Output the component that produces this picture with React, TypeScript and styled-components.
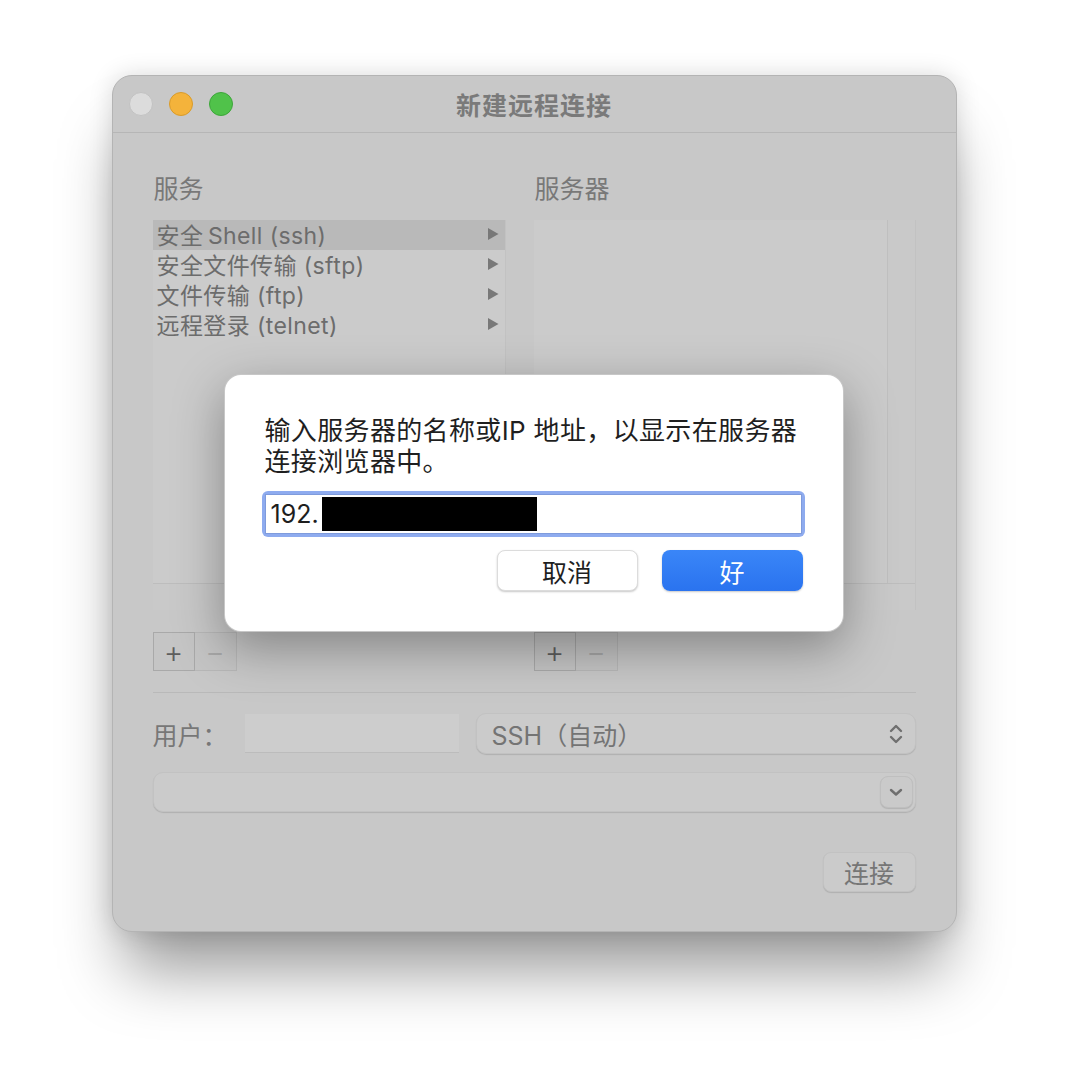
import styled, { createGlobalStyle } from "styled-components";

const GlobalStyle = createGlobalStyle`
  html, body {
    margin: 0;
    padding: 0;
    background: #ffffff;
  }
  body {
    font-family: "Inter", "Noto Sans CJK SC", sans-serif;
  }
`;

const services = [
  "安全\u2009Shell (ssh)",
  "安全文件传输 (sftp)",
  "文件传输 (ftp)",
  "远程登录 (telnet)",
];

const Arrow = () => (
  <svg width="12" height="14" viewBox="0 0 12 14">
    <polygon points="1,1 11.5,7 1,13" fill="#787878" />
  </svg>
);

const UpDown = () => (
  <svg width="14" height="24" viewBox="0 0 14 24">
    <path
      d="M2 9 L7 4 L12 9 M2 15 L7 20 L12 15"
      fill="none"
      stroke="#6f6f6f"
      strokeWidth="2.4"
      strokeLinecap="round"
      strokeLinejoin="round"
    />
  </svg>
);

const ChevronDown = () => (
  <svg width="14" height="10" viewBox="0 0 14 10">
    <path
      d="M2 3 L7 7.5 L12 3"
      fill="none"
      stroke="#6f6f6f"
      strokeWidth="2.4"
      strokeLinecap="round"
      strokeLinejoin="round"
    />
  </svg>
);

const AddRemove = () => (
  <Segment>
    <SegButton>+</SegButton>
    <SegButton $disabled>−</SegButton>
  </Segment>
);

export default function App() {
  return (
    <Page>
      <GlobalStyle />
      <Window>
        <TitleBar>
          <Lights>
            <Light $color="#dcdcdc" $ring="#c2c2c2" />
            <Light $color="#f4b33b" $ring="#d99b2a" />
            <Light $color="#50c24a" $ring="#3da63a" />
          </Lights>
          <Title>新建远程连接</Title>
          <span />
        </TitleBar>

        <Body>
          <Columns>
            <Column>
              <SectionLabel>服务</SectionLabel>
              <ListBox>
                <ListMain>
                  <Rows>
                    {services.map((name, i) => (
                      <Row key={name} $selected={i === 0}>
                        <span>{name}</span>
                        <Arrow />
                      </Row>
                    ))}
                  </Rows>
                </ListMain>
                <HScroll />
              </ListBox>
              <AddRemove />
            </Column>

            <Column>
              <SectionLabel>服务器</SectionLabel>
              <ListBox>
                <ListMain>
                  <Rows />
                  <VScroll />
                </ListMain>
                <HScroll />
              </ListBox>
              <AddRemove />
            </Column>
          </Columns>

          <Divider />

          <UserRow>
            <FieldLabel>用户：</FieldLabel>
            <TextField />
            <Popup>
              <span>SSH（自动）</span>
              <UpDown />
            </Popup>
          </UserRow>

          <Combo>
            <ComboButton>
              <ChevronDown />
            </ComboButton>
          </Combo>

          <Footer>
            <PlainButton>连接</PlainButton>
          </Footer>
        </Body>

        <Sheet>
          <Prompt>
            输入服务器的名称或IP 地址，以显示在服务器
            <br />
            连接浏览器中。
          </Prompt>
          <FocusRing>
            <AddressInput>
              192.
              <Redacted />
            </AddressInput>
          </FocusRing>
          <SheetButtons>
            <SheetButton>取消</SheetButton>
            <SheetButton $primary>好</SheetButton>
          </SheetButtons>
        </Sheet>
      </Window>
    </Page>
  );
}

const Page = styled.div`
  width: 1068px;
  height: 1080px;
  display: flex;
  justify-content: center;
  align-items: flex-start;
  padding-top: 75px;
  box-sizing: border-box;
  overflow: hidden;
`;

const Window = styled.div`
  position: relative;
  width: 845px;
  height: 857px;
  box-sizing: border-box;
  background: #c8c8c8;
  border-radius: 20px;
  border: 1px solid #b4b4b4;
  box-shadow: 0 50px 64px -12px rgba(0, 0, 0, 0.4),
    0 0 24px rgba(0, 0, 0, 0.14);
  display: flex;
  flex-direction: column;
`;

const TitleBar = styled.div`
  height: 56px;
  flex: none;
  display: grid;
  grid-template-columns: 1fr auto 1fr;
  align-items: center;
  padding: 0 16px;
  border-bottom: 1px solid #b6b6b6;
`;

const Lights = styled.div`
  display: flex;
  gap: 16px;
`;

const Light = styled.div<{ $color: string; $ring: string }>`
  width: 24px;
  height: 24px;
  box-sizing: border-box;
  border-radius: 50%;
  background: ${(p) => p.$color};
  border: 1px solid ${(p) => p.$ring};
`;

const Title = styled.div`
  font-size: 25px;
  font-weight: 700;
  color: #7a7a7a;
  letter-spacing: 1px;
`;

const Body = styled.div`
  flex: 1;
  display: flex;
  flex-direction: column;
  padding: 41px 40px 0 40px;
`;

const Columns = styled.div`
  display: grid;
  grid-template-columns: 353px 1fr;
  column-gap: 28px;
`;

const Column = styled.div`
  display: flex;
  flex-direction: column;
`;

const SectionLabel = styled.div`
  font-size: 25px;
  line-height: 30px;
  color: #787878;
  margin-bottom: 16px;
  padding-left: 1px;
`;

const ListBox = styled.div`
  height: 390px;
  display: flex;
  flex-direction: column;
  background: #cbcbcb;
  border-right: 1px solid #c2c2c2;
`;

const ListMain = styled.div`
  flex: 1;
  display: flex;
`;

const Rows = styled.div`
  flex: 1;
  display: flex;
  flex-direction: column;
`;

const Row = styled.div<{ $selected?: boolean }>`
  height: 30px;
  display: flex;
  align-items: center;
  justify-content: space-between;
  padding: 0 6px 2px 4px;
  box-sizing: border-box;
  font-size: 23px;
  letter-spacing: 0.4px;
  color: #6c6c6c;
  background: ${(p) => (p.$selected ? "#b9b9b9" : "transparent")};
`;

const VScroll = styled.div`
  width: 27px;
  border-left: 1px solid #bfbfbf;
  background: #c9c9c9;
`;

const HScroll = styled.div`
  height: 26px;
  flex: none;
  border-top: 1px solid #bdbdbd;
  background: #c9c9c9;
`;

const Segment = styled.div`
  display: flex;
  margin-top: 22px;
`;

const SegButton = styled.div<{ $disabled?: boolean }>`
  width: 42px;
  height: 39px;
  box-sizing: border-box;
  display: flex;
  align-items: center;
  justify-content: center;
  font-size: 30px;
  font-weight: 300;
  color: ${(p) => (p.$disabled ? "#a8a8a8" : "#5e5e5e")};
  background: #c5c5c5;
  border: 1px solid ${(p) => (p.$disabled ? "#b8b8b8" : "#a9a9a9")};
  & + & {
    border-left: none;
  }
`;

const Divider = styled.div`
  height: 1px;
  background: #b9b9b9;
  margin-top: 21px;
`;

const UserRow = styled.div`
  display: flex;
  align-items: center;
  margin-top: 20px;
`;

const FieldLabel = styled.div`
  font-size: 25px;
  color: #777777;
  width: 92px;
  flex: none;
`;

const TextField = styled.div`
  width: 214px;
  height: 39px;
  flex: none;
  background: #cdcdcd;
  border-bottom: 1px solid #bcbcbc;
  box-sizing: border-box;
`;

const Popup = styled.div`
  flex: 1;
  margin-left: 17px;
  height: 41px;
  box-sizing: border-box;
  display: flex;
  align-items: center;
  justify-content: space-between;
  padding: 0 12px 0 15px;
  border-radius: 10px;
  background: #cbcbcb;
  border: 1px solid #c2c2c2;
  box-shadow: 0 1px 1px rgba(0, 0, 0, 0.12);
  font-size: 25px;
  color: #747474;
`;

const Combo = styled.div`
  height: 40px;
  margin-top: 18px;
  box-sizing: border-box;
  display: flex;
  justify-content: flex-end;
  align-items: center;
  padding-right: 2px;
  border-radius: 10px;
  background: #cbcbcb;
  border: 1px solid #c2c2c2;
  box-shadow: 0 1px 1px rgba(0, 0, 0, 0.12);
`;

const ComboButton = styled.div`
  width: 33px;
  height: 32px;
  box-sizing: border-box;
  display: flex;
  align-items: center;
  justify-content: center;
  border-radius: 8px;
  background: #cacaca;
  border: 1px solid #bfbfbf;
  box-shadow: 0 1px 1px rgba(0, 0, 0, 0.12);
`;

const Footer = styled.div`
  display: flex;
  justify-content: flex-end;
  margin-top: 40px;
`;

const PlainButton = styled.div`
  width: 93px;
  height: 40px;
  box-sizing: border-box;
  display: flex;
  align-items: center;
  justify-content: center;
  border-radius: 8px;
  background: #cbcbcb;
  border: 1px solid #c2c2c2;
  box-shadow: 0 1px 1px rgba(0, 0, 0, 0.12);
  font-size: 25px;
  color: #767676;
`;

/* modal sheet sitting over the dimmed window */
const Sheet = styled.div`
  position: absolute;
  left: 111px;
  top: 298px;
  width: 620px;
  height: 258px;
  box-sizing: border-box;
  padding: 40px 38px 0 37px;
  background: #ffffff;
  border-radius: 17px;
  border: 1px solid rgba(0, 0, 0, 0.22);
  box-shadow: 0 16px 50px rgba(0, 0, 0, 0.34);
  display: flex;
  flex-direction: column;
`;

const Prompt = styled.div`
  font-size: 26px;
  line-height: 31px;
  letter-spacing: 0.35px;
  color: #1f1f1f;
  padding-left: 3px;
`;

const FocusRing = styled.div`
  margin-top: 14px;
  padding: 3px;
  border-radius: 6px;
  background: #8eabef;
`;

const AddressInput = styled.div`
  height: 40px;
  box-sizing: border-box;
  display: flex;
  align-items: center;
  padding-left: 5px;
  background: #ffffff;
  border: 1px solid #7f9bdc;
  font-size: 25px;
  color: #1e1e1e;
`;

const Redacted = styled.span`
  display: inline-block;
  width: 215px;
  height: 34px;
  margin-left: 3px;
  background: #000000;
`;

const SheetButtons = styled.div`
  display: flex;
  justify-content: flex-end;
  gap: 24px;
  margin-top: 13px;
  padding-right: 2px;
`;

const SheetButton = styled.div<{ $primary?: boolean }>`
  width: 141px;
  height: 41px;
  box-sizing: border-box;
  display: flex;
  align-items: center;
  justify-content: center;
  border-radius: 8px;
  font-size: 25px;
  color: ${(p) => (p.$primary ? "#ffffff" : "#1f1f1f")};
  background: ${(p) =>
    p.$primary ? "linear-gradient(#3a86f8, #2a73ef)" : "#ffffff"};
  border: ${(p) => (p.$primary ? "none" : "1px solid #dcdcdc")};
  box-shadow: 0 1px 2px rgba(0, 0, 0, 0.22);
`;
